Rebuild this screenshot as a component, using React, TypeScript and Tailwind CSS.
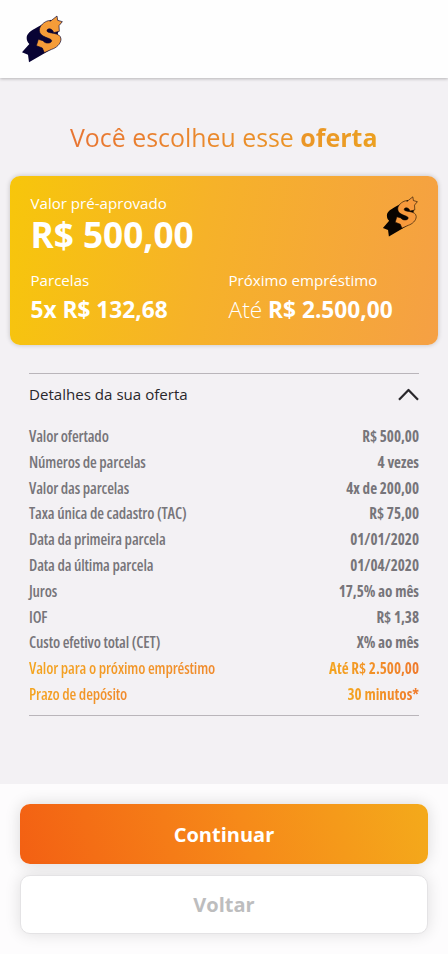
type LogoProps = {
  className: string;
  shade: string;
  front: string;
};

const Logo = ({ className, shade, front }: LogoProps) => {
  return (
    <svg viewBox="0 0 126 144" className={className} aria-hidden="true">
      {/* Extruded side */}
      <path
        d="M90 14L50 36C28 48 17 56 17 69C17 77 20 82 25 87L3 112L21 119L24 142L72 114L100 96L112 50L100 30Z"
        fill={shade}
      />
      {/* Dollar sign */}
      <path
        d="M108 3L110 16L124 20L114 32L115 49L98 53C94 38 77 39 78 48C79 57 119 50 120 72C120 87 105 99 92 103L70 113L64 99L46 92L52 73L66 77C73 88 92 85 92 77C91 68 55 68 55 46C55 32 70 20 82 17L89 18Z"
        fill={front}
        stroke={shade}
        strokeWidth="2"
        strokeLinejoin="round"
      />
    </svg>
  );
};

const details = [
  { label: "Valor ofertado", value: "R$ 500,00" },
  { label: "Números de parcelas", value: "4 vezes" },
  { label: "Valor das parcelas", value: "4x de 200,00" },
  { label: "Taxa única de cadastro (TAC)", value: "R$ 75,00" },
  { label: "Data da primeira parcela", value: "01/01/2020" },
  { label: "Data da última parcela", value: "01/04/2020" },
  { label: "Juros", value: "17,5% ao mês" },
  { label: "IOF", value: "R$ 1,38" },
  { label: "Custo efetivo total (CET)", value: "X% ao mês" },
  { label: "Valor para o próximo empréstimo", value: "Até R$ 2.500,00", highlight: true },
  { label: "Prazo de depósito", value: "30 minutos*", highlight: true },
];

const App = () => {
  return (
    <div className="w-[448px] h-[954px] flex flex-col overflow-hidden bg-[#f3f1f4] font-['Open_Sans','Noto_Sans',sans-serif]">
      {/* Header */}
      <header className="h-[78px] shrink-0 bg-[#fefefe] pt-[15px] pl-[21px] shadow-[0_1px_3px_rgba(0,0,0,0.25)]">
        <Logo className="w-[42px] h-[48px]" shade="#080334" front="#f59c38" />
      </header>

      <main className="flex-1 pt-[41px]">
        <h1 className="w-[308px] h-[36px] mx-auto whitespace-nowrap text-[24.9px] leading-[36px] font-normal text-transparent bg-clip-text bg-linear-to-r from-[#e87532] to-[#eba021]">
          Você escolheu esse <b className="text-[25px] font-bold">oferta</b>
        </h1>

        {/* Offer card */}
        <section className="h-[169px] mt-[21px] mx-[10px] pt-[17px] pl-[20.5px] pr-[20px] rounded-[10px] text-white bg-linear-[100deg,#f7c60b,#f6b229_45%,#f5a044] shadow-[0_0_5px_rgba(0,0,0,0.2)]">
          <div className="flex justify-between">
            <div>
              <p className="text-[15.1px] leading-5">Valor pré-aprovado</p>
              <p className="text-[35.2px] leading-[43px] font-bold">R$ 500,00</p>
            </div>
            <Logo className="w-[36px] h-[41px] mt-[3px]" shade="#080400" front="#f79a3c" />
          </div>

          <div className="flex mt-[14px]">
            <div className="w-[198px]">
              <p className="text-[15.1px] leading-5">Parcelas</p>
              <p className="text-[22.7px] leading-[40px] font-bold">5x R$ 132,68</p>
            </div>
            <div>
              <p className="text-[15.1px] leading-5">Próximo empréstimo</p>
              <p className="text-[22.7px] leading-[40px] font-light">
                Até <b className="font-bold">R$ 2.500,00</b>
              </p>
            </div>
          </div>
        </section>

        {/* Offer details */}
        <section className="mt-[28px] mx-[29px] border-y border-[#b9b5ba]">
          <div className="h-[41px] flex justify-between items-center text-[#29272b]">
            <h2 className="text-[15.1px]">Detalhes da sua oferta</h2>
            <svg width="21" height="13" viewBox="0 0 21 13" fill="none" stroke="currentColor" strokeWidth="2.2">
              <path d="M1 11.8L10.5 2L20 11.8" strokeLinejoin="round" />
            </svg>
          </div>

          <ul className="pt-[9px] pb-[7px] text-[15.1px] leading-[25.8px] font-stretch-75%">
            {details.map((item) => (
              <li key={item.label} className="h-[25.8px] flex justify-between text-[#77757a]">
                <span className={item.highlight ? "text-[15.5px] tracking-[-0.14px] font-semibold text-transparent bg-clip-text bg-linear-to-r from-[#f4a51f] to-[#f08a2c]" : "text-[15.5px] tracking-[-0.14px] font-semibold"}>{item.label}</span>
                <span className={item.highlight ? "font-bold text-transparent bg-clip-text bg-linear-to-r from-[#f4a51f] to-[#ef7a2c]" : "font-bold"}>{item.value}</span>
              </li>
            ))}
          </ul>
        </section>
      </main>

      {/* Actions */}
      <footer className="h-[170px] shrink-0 flex flex-col gap-[11px] pt-5 px-5 bg-[#fdfcfd]">
        <button className="h-[60px] shrink-0 pt-px rounded-[10px] text-[20px] font-bold text-white bg-linear-[75deg,#f36013,#f68a19_55%,#f4aa1b] shadow-[0_0_16px_rgba(0,0,0,0.14)]">
          Continuar
        </button>
        <button className="h-[59px] shrink-0 rounded-[10px] border border-[#e4e3e5] text-[20px] font-bold text-[#bdbdbe] bg-white shadow-[0_0_16px_rgba(0,0,0,0.12)]">
          Voltar
        </button>
      </footer>
    </div>
  );
};

export default App;
